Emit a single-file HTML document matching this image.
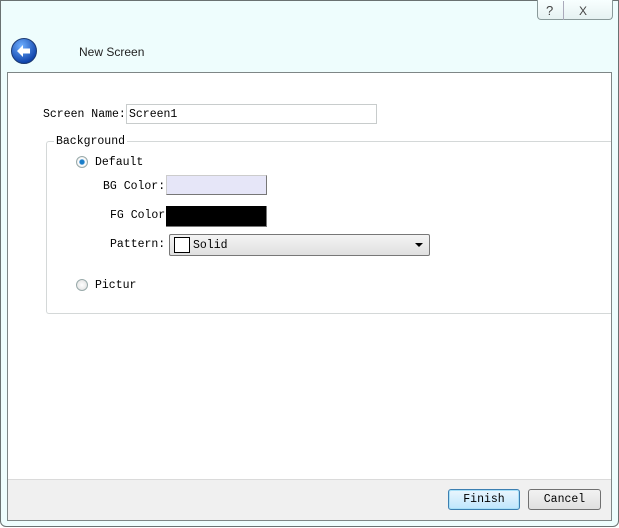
<!DOCTYPE html>
<html><head><style>
*{margin:0;padding:0;box-sizing:border-box}
body{width:619px;height:528px;background:#fff;position:relative;overflow:hidden;font-family:"Liberation Mono","Noto Sans CJK SC",monospace;font-size:11.5px;color:#000}
.win{position:absolute;left:0;top:0;width:619px;height:527px;background:#eefdfd;border:1px solid #6a7272;border-radius:0 0 6px 6px}
.abs{position:absolute}
.panel{position:absolute;left:7px;top:72px;width:605px;height:449px;border:1px solid #7e8686;background:#fff}
.bar{position:absolute;left:0;right:0;top:406px;bottom:0;background:#f0f0f0;border-top:1px solid #dadada}
.lbl{position:absolute;line-height:14px;white-space:nowrap}
.btn{position:absolute;height:21px;border:1px solid #707070;border-radius:3px;background:linear-gradient(#f2f2f2,#e0e0e0);text-align:center;line-height:19px}
.radio{position:absolute;width:12px;height:12px;border-radius:50%;border:1px solid #9aa;background:radial-gradient(#fff,#ddd)}
</style></head><body>
<div class="win">
 <div class="abs" style="left:536px;top:-1px;width:76px;height:20px;border:1px solid #8a9a9a;border-top:none;border-radius:0 0 4px 4px;background:linear-gradient(#f8ffff,#e6f2f2)"></div>
 <div class="abs" style="left:562px;top:0;width:1px;height:19px;background:#aab"></div>
 <div class="lbl" style="left:545px;top:3px;font-family:'Liberation Sans',sans-serif;font-size:13px;color:#444">?</div>
 <div class="lbl" style="left:578px;top:3px;font-family:'Liberation Sans',sans-serif;font-size:12px;color:#444">X</div>
 <svg class="abs" style="left:9px;top:36px" width="28" height="28" viewBox="0 0 28 28">
  <defs><radialGradient id="g" cx="0.4" cy="0.3" r="0.7"><stop offset="0" stop-color="#6fb0ff"/><stop offset="1" stop-color="#0b3fa8"/></radialGradient></defs>
  <circle cx="14" cy="14" r="12.5" fill="url(#g)" stroke="#1c3a72"/>
  <path d="M7 14 L13 8 L13 11.5 L20 11.5 L20 16.5 L13 16.5 L13 20 Z" fill="#fff"/>
 </svg>
 <div class="lbl" style="left:78px;top:44px;font-family:'Liberation Sans',sans-serif;font-size:12px;color:#222">New Screen</div>
</div>
<div class="panel">
 <div class="bar"></div>
</div>
<div class="lbl" style="left:43px;top:108px">Screen Name:</div>
<div class="abs" style="left:126px;top:104px;width:251px;height:20px;border:1px solid #c8cccc;background:#fff"></div>
<div class="lbl" style="left:129px;top:108px">Screen1</div>
<div class="abs" style="left:46px;top:141px;width:565px;height:173px;border:1px solid #d4d8d8;border-right:none;border-radius:3px 0 0 3px"></div>
<div class="lbl" style="left:54px;top:135px;background:#fff;padding:0 2px">Background</div>
<div class="radio" style="left:76px;top:156px;background:radial-gradient(#1a7dc9 30%,#fff 45%,#ddd)"></div>
<div class="lbl" style="left:95px;top:156px">Default</div>
<div class="lbl" style="left:103px;top:180px">BG Color:</div>
<div class="abs" style="left:166px;top:175px;width:101px;height:20px;background:#e6e6f8;border:1px solid #ccc;border-right-color:#777;border-bottom-color:#777"></div>
<div class="lbl" style="left:110px;top:209px">FG Color</div>
<div class="abs" style="left:166px;top:206px;width:101px;height:21px;background:#000;border-right:1px solid #777;border-bottom:1px solid #777"></div>
<div class="lbl" style="left:110px;top:238px">Pattern:</div>
<div class="abs" style="left:169px;top:234px;width:261px;height:22px;border:1px solid #777;border-radius:2px;background:linear-gradient(#f4f4f4,#e0e0e0)"></div>
<div class="abs" style="left:174px;top:237px;width:16px;height:16px;border:1px solid #000;background:#fff"></div>
<div class="lbl" style="left:193px;top:239px">Solid</div>
<div class="abs" style="left:415px;top:243px;width:0;height:0;border-left:4px solid transparent;border-right:4px solid transparent;border-top:4px solid #000"></div>
<div class="radio" style="left:76px;top:279px"></div>
<div class="lbl" style="left:95px;top:279px">Pictur</div>
<div class="btn" style="left:448px;top:489px;width:72px;border-color:#3c7fb1;box-shadow:inset 0 0 0 1px #a8e0f8;background:linear-gradient(#eaf6fd,#bee6fd);line-height:20px">Finish</div>
<div class="btn" style="left:528px;top:489px;width:73px;line-height:20px">Cancel</div>
</body></html>
